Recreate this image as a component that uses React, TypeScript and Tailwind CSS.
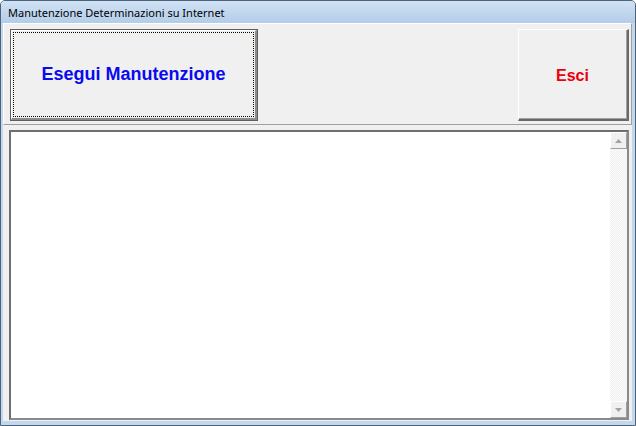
import type { ReactNode } from 'react';

function Arrow({ up }: { up?: boolean }) {
  return (
    <div className="flex h-[17px] w-[17px] items-center justify-center border border-t-white border-l-white border-b-[#a0a0a0] border-r-[#a0a0a0] bg-[#f0f0f0]">
      <svg width="7" height="4" viewBox="0 0 7 4">
        {up ? <polygon points="0,4 7,4 3.5,0" fill="#a3a3a3" /> : <polygon points="0,0 7,0 3.5,4" fill="#a3a3a3" />}
      </svg>
    </div>
  );
}

function DefaultButton({ children }: { children: ReactNode }) {
  return (
    <div className="h-[92px] w-[248px] border border-[#5f5f5f]">
      <div className="h-full w-full border-t border-l border-b-2 border-r-2 border-t-white border-l-white border-b-[#8c8c8c] border-r-[#8c8c8c] bg-[#f0f0f0] p-[1px]">
        <div className="h-full w-full border border-dotted border-black bg-[#fbfbe2]">
          <div className="flex h-full w-full items-center justify-center bg-[#f0f0f0]">{children}</div>
        </div>
      </div>
    </div>
  );
}

function PlainButton({ children }: { children: ReactNode }) {
  return (
    <div className="h-[92px] w-[111px] border-t border-l border-b-2 border-r-2 border-t-white border-l-white border-b-[#696969] border-r-[#696969]">
      <div className="flex h-full w-full items-center justify-center border-b border-r border-b-[#a0a0a0] border-r-[#a0a0a0] bg-[#f0f0f0]">
        {children}
      </div>
    </div>
  );
}

export default function App() {
  return (
    <div className="flex h-[426px] w-[636px] flex-col overflow-hidden rounded-t-[5px] border border-[#4f6276] bg-[#c2d8ef] font-['Noto_Sans',sans-serif]">
      {/* Title bar */}
      <div className="h-[22px] shrink-0 bg-gradient-to-b from-[#d0e2f4] to-[#b3cce9] pl-[7px] text-[11px] leading-[23px] text-black">
        Manutenzione Determinazioni su Internet
      </div>

      {/* Client area */}
      <div className="mb-[4px] ml-[2px] mr-[3px] flex flex-1 flex-col bg-[#f0f0f0]">
        {/* Button panel */}
        <div className="flex h-[102px] shrink-0 items-start justify-between border border-t-white border-l-white border-b-[#a0a0a0] border-r-[#a0a0a0] pl-[6px] pr-[2px] pt-[5px]">
          <DefaultButton>
            <span className="font-['Liberation_Sans',Arial,sans-serif] text-[18px] font-bold text-[#0a0aee]">Esegui Manutenzione</span>
          </DefaultButton>
          <PlainButton>
            <span className="pt-[3px] font-['Liberation_Sans',Arial,sans-serif] text-[16px] font-bold text-[#e8000b]">Esci</span>
          </PlainButton>
        </div>

        {/* Log textbox */}
        <div className="mb-[1px] ml-[6px] mr-[3px] mt-[5px] flex flex-1 border-2 border-t-[#6e6e6e] border-l-[#6e6e6e] border-b-[#8a8a8a] border-r-[#8a8a8a] bg-white">
          <div className="flex-1" />
          <div className="flex w-[17px] flex-col justify-between bg-[repeating-conic-gradient(#eeeeee_0_25%,#fdfdfd_0_50%)] bg-[length:2px_2px]">
            <Arrow up />
            <Arrow />
          </div>
        </div>
      </div>
    </div>
  );
}
